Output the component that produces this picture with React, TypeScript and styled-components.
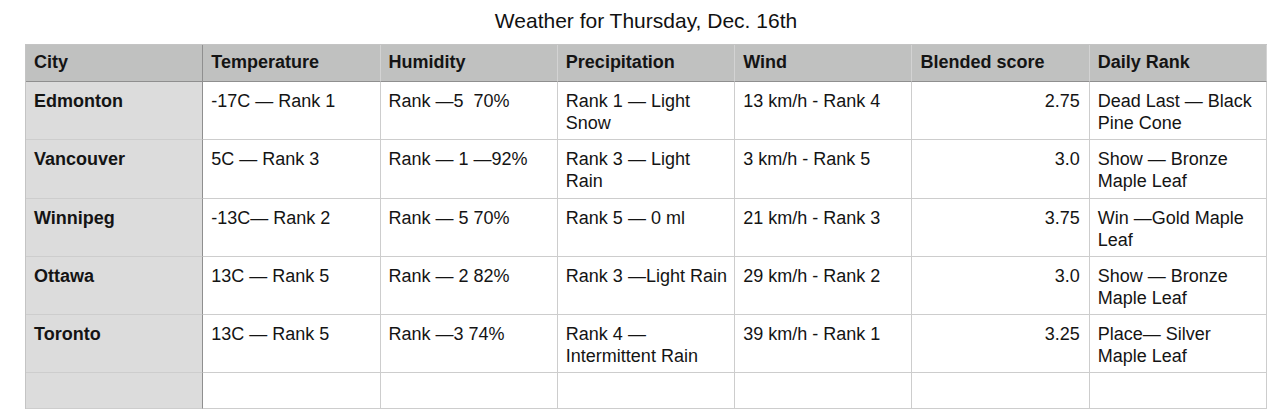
import React from "react";
import styled, { createGlobalStyle, css } from "styled-components";

const GlobalStyle = createGlobalStyle`
  html, body {
    margin: 0;
    padding: 0;
    background: #ffffff;
  }
  body {
    font-family: "Liberation Sans", Arial, Helvetica, sans-serif;
    color: #141414;
  }
`;

const Page = styled.div`
  width: 1280px;
  height: 420px;
  padding-left: 25px;
  box-sizing: border-box;
  overflow: hidden;
`;

const Title = styled.h1`
  width: 1242px;
  margin: 0 0 11px 0;
  padding-top: 9px;
  font-size: 21px;
  line-height: 24px;
  font-weight: 400;
  text-align: center;
  color: #111;
`;

const Table = styled.div`
  width: 1242px;
  display: grid;
  grid-template-columns: repeat(7, 1fr);
  grid-template-rows: 37px repeat(5, 58.3px) 35.5px;
  border-top: 1px solid #c4c4c4;
  border-left: 1px solid #c4c4c4;
  box-sizing: border-box;
`;

type CellProps = {
  $kind: "head" | "city" | "data";
  $first?: boolean;
  $align?: "left" | "right";
};

const Cell = styled.div<CellProps>`
  box-sizing: border-box;
  min-width: 0;
  font-size: 18px;
  line-height: 22px;
  white-space: pre-wrap;
  padding: 8px 6px 0 8px;
  border-right: 1px solid #cdcdcd;
  border-bottom: 1px solid #cdcdcd;
  background: #ffffff;
  text-align: ${(p) => p.$align ?? "left"};
  ${(p) =>
    p.$align === "right" &&
    css`
      padding-right: 9px;
    `}
  ${(p) =>
    p.$kind === "head" &&
    css`
      background: #c0c1c0;
      font-weight: 700;
      padding-top: 6px;
      border-bottom: 1px solid #8f8f8f;
      border-right: 1px solid #d3d3d3;
    `}
  ${(p) =>
    p.$kind === "city" &&
    css`
      background: #dcdcdc;
      font-weight: 700;
    `}
  ${(p) =>
    p.$first &&
    css`
      border-right: 1px solid #8f8f8f;
    `}
`;

const headers = [
  "City",
  "Temperature",
  "Humidity",
  "Precipitation",
  "Wind",
  "Blended score",
  "Daily Rank",
];

const rows: string[][] = [
  [
    "Edmonton",
    "-17C — Rank 1",
    "Rank —5  70%",
    "Rank 1 — Light Snow",
    "13 km/h - Rank 4",
    "2.75",
    "Dead Last — Black Pine Cone",
  ],
  [
    "Vancouver",
    "5C — Rank 3",
    "Rank — 1 —92%",
    "Rank 3 — Light Rain",
    "3 km/h - Rank 5",
    "3.0",
    "Show — Bronze Maple Leaf",
  ],
  [
    "Winnipeg",
    "-13C— Rank 2",
    "Rank — 5 70%",
    "Rank 5 — 0 ml",
    "21 km/h - Rank 3",
    "3.75",
    "Win —Gold Maple Leaf",
  ],
  [
    "Ottawa",
    "13C — Rank 5",
    "Rank — 2 82%",
    "Rank 3 —Light Rain",
    "29 km/h - Rank 2",
    "3.0",
    "Show — Bronze Maple Leaf",
  ],
  [
    "Toronto",
    "13C — Rank 5",
    "Rank —3 74%",
    "Rank 4 — Intermittent Rain",
    "39 km/h - Rank 1",
    "3.25",
    "Place— Silver Maple Leaf",
  ],
  ["", "", "", "", "", "", ""],
];

export default function App() {
  return (
    <Page>
      <GlobalStyle />
      <Title>Weather for Thursday, Dec. 16th</Title>
      <Table>
        {headers.map((h, i) => (
          <Cell key={`h${i}`} $kind="head" $first={i === 0}>
            {h}
          </Cell>
        ))}
        {rows.map((row, r) =>
          row.map((value, c) => (
            <Cell
              key={`${r}-${c}`}
              $kind={c === 0 ? "city" : "data"}
              $first={c === 0}
              $align={c === 5 ? "right" : "left"}
            >
              {value}
            </Cell>
          ))
        )}
      </Table>
    </Page>
  );
}
